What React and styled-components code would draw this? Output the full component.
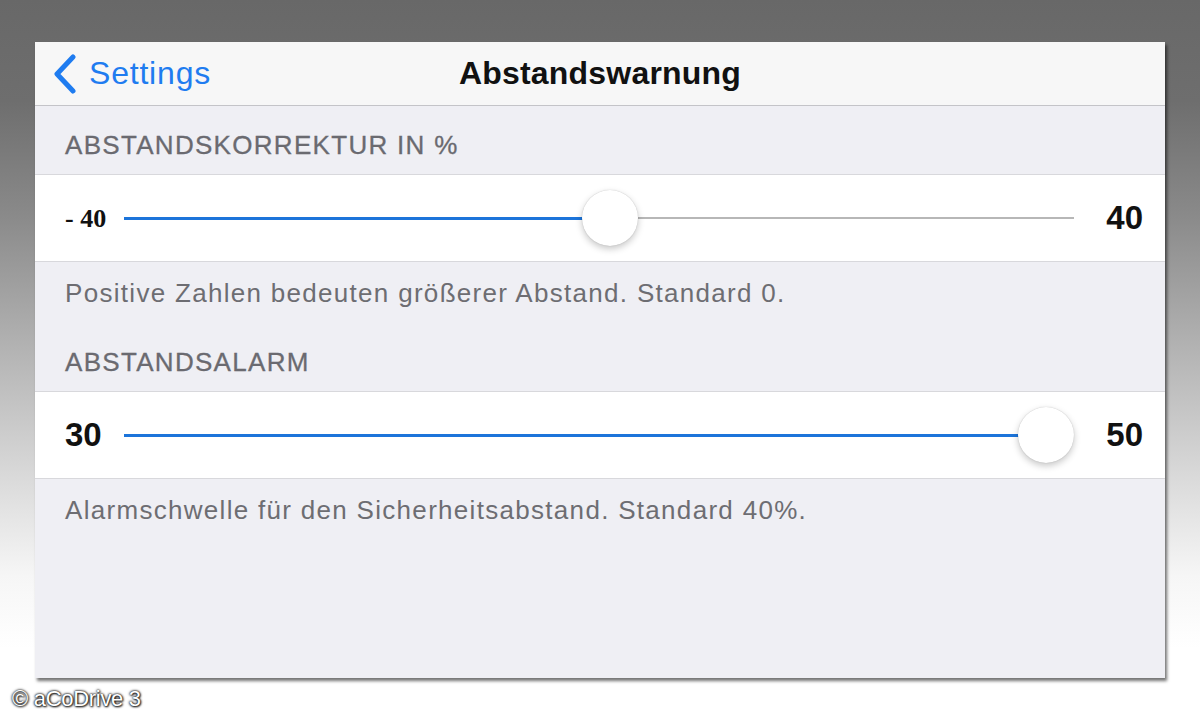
import React from "react";
import styled, { createGlobalStyle } from "styled-components";

const GlobalStyle = createGlobalStyle`
  html, body {
    margin: 0;
    padding: 0;
  }
  body {
    width: 1200px;
    height: 720px;
    overflow: hidden;
    font-family: "Liberation Sans", Arial, sans-serif;
    background: linear-gradient(to bottom, #686868 0%, #6e6e6e 14%, #8a8a8a 30%, #b2b2b2 48%, #d9d9d9 66%, #f6f6f6 80%, #ffffff 90%);
  }
`;

const Page = styled.div`
  height: 720px;
  box-sizing: border-box;
  padding: 42px 35px 0 35px;
  display: flex;
  flex-direction: column;
`;

const Screen = styled.div`
  width: 1130px;
  height: 636px;
  background: #efeff4;
  display: flex;
  flex-direction: column;
  box-shadow: 2px 3px 3px rgba(0, 0, 0, 0.55);
`;

const NavBar = styled.div`
  height: 63px;
  flex: none;
  background: #f7f7f7;
  border-bottom: 1px solid #c4c4c8;
  display: grid;
  grid-template-columns: 1fr auto 1fr;
  align-items: center;
`;

const BackButton = styled.div`
  display: flex;
  align-items: center;
  gap: 11px;
  padding-left: 17px;
  color: #1f7cf0;
  font-size: 32px;
  letter-spacing: 0.8px;
`;

const Title = styled.div`
  font-size: 32px;
  font-weight: 700;
  color: #111;
  letter-spacing: 0.2px;
`;

const SectionHeader = styled.div`
  padding: 22px 30px 12px 30px;
  font-size: 26px;
  line-height: 34px;
  color: #6a6a70;
  letter-spacing: 1.3px;
  -webkit-text-stroke: 0.3px #6a6a70;
`;

const Row = styled.div`
  height: 86px;
  background: #fff;
  border-top: 1px solid #d8d8dc;
  border-bottom: 1px solid #d8d8dc;
  display: flex;
  align-items: center;
  padding: 0 22px 0 30px;
`;

const MinLabel = styled.div`
  width: 59px;
  flex: none;
  color: #111;
  font-weight: 700;
  font-family: ${(p) => (p.$serif ? '"Liberation Serif", "Times New Roman", serif' : '"Liberation Sans", Arial, sans-serif')};
  font-size: ${(p) => (p.$serif ? "26px" : "33px")};
  margin-top: ${(p) => (p.$serif ? "2px" : "0")};
`;

const MaxLabel = styled.div`
  width: 69px;
  flex: none;
  text-align: right;
  color: #111;
  font-weight: 700;
  font-size: 33px;
`;

const Track = styled.div`
  flex: 1;
  height: 56px;
  position: relative;
  display: flex;
  align-items: center;
`;

const Rail = styled.div`
  width: 100%;
  height: 2px;
  background: #b7b7b7;
`;

const Fill = styled.div`
  position: absolute;
  left: 0;
  top: 27px;
  height: 3px;
  background: #1c74da;
`;

const Thumb = styled.div`
  position: absolute;
  top: 0;
  width: 56px;
  height: 56px;
  margin-left: -28px;
  border-radius: 50%;
  background: #fff;
  box-shadow: 0 3px 7px rgba(0, 0, 0, 0.22), 0 0 1px rgba(0, 0, 0, 0.25);
`;

const Footer = styled.div`
  padding: 14px 30px 13px 30px;
  font-size: 26px;
  line-height: 34px;
  color: #6d6d72;
  letter-spacing: 1.3px;
`;

const Credit = styled.div`
  margin: 8px 0 0 -23px;
  font-size: 22px;
  color: #fff;
  letter-spacing: -0.3px;
  text-shadow: 0 0 2px #000, 0 0 3px #222, 1px 1px 2px #333;
`;

const Chevron = () => (
  <svg width="26" height="40" viewBox="0 0 26 40">
    <path d="M21 3 L5 20 L21 37" fill="none" stroke="#1f7cf0" strokeWidth="5" strokeLinecap="round" strokeLinejoin="round" />
  </svg>
);

const Slider = ({ min, max, value }) => {
  const ratio = (value - min) / (max - min);
  const left = `calc(28px + (100% - 56px) * ${ratio})`;
  return (
    <Track>
      <Rail />
      <Fill style={{ width: left }} />
      <Thumb style={{ left }} />
    </Track>
  );
};

const App = () => (
  <>
    <GlobalStyle />
    <Page>
      <Screen>
        <NavBar>
          <BackButton>
            <Chevron />
            Settings
          </BackButton>
          <Title>Abstandswarnung</Title>
          <div />
        </NavBar>

        <SectionHeader>ABSTANDSKORREKTUR IN %</SectionHeader>
        <Row>
          <MinLabel $serif>- 40</MinLabel>
          <Slider min={-40} max={40} value={1} />
          <MaxLabel>40</MaxLabel>
        </Row>
        <Footer>Positive Zahlen bedeuten größerer Abstand. Standard 0.</Footer>

        <SectionHeader>ABSTANDSALARM</SectionHeader>
        <Row>
          <MinLabel>30</MinLabel>
          <Slider min={30} max={50} value={50} />
          <MaxLabel>50</MaxLabel>
        </Row>
        <Footer>Alarmschwelle für den Sicherheitsabstand. Standard 40%.</Footer>
      </Screen>
      <Credit>© aCoDrive 3</Credit>
    </Page>
  </>
);

export default App;
